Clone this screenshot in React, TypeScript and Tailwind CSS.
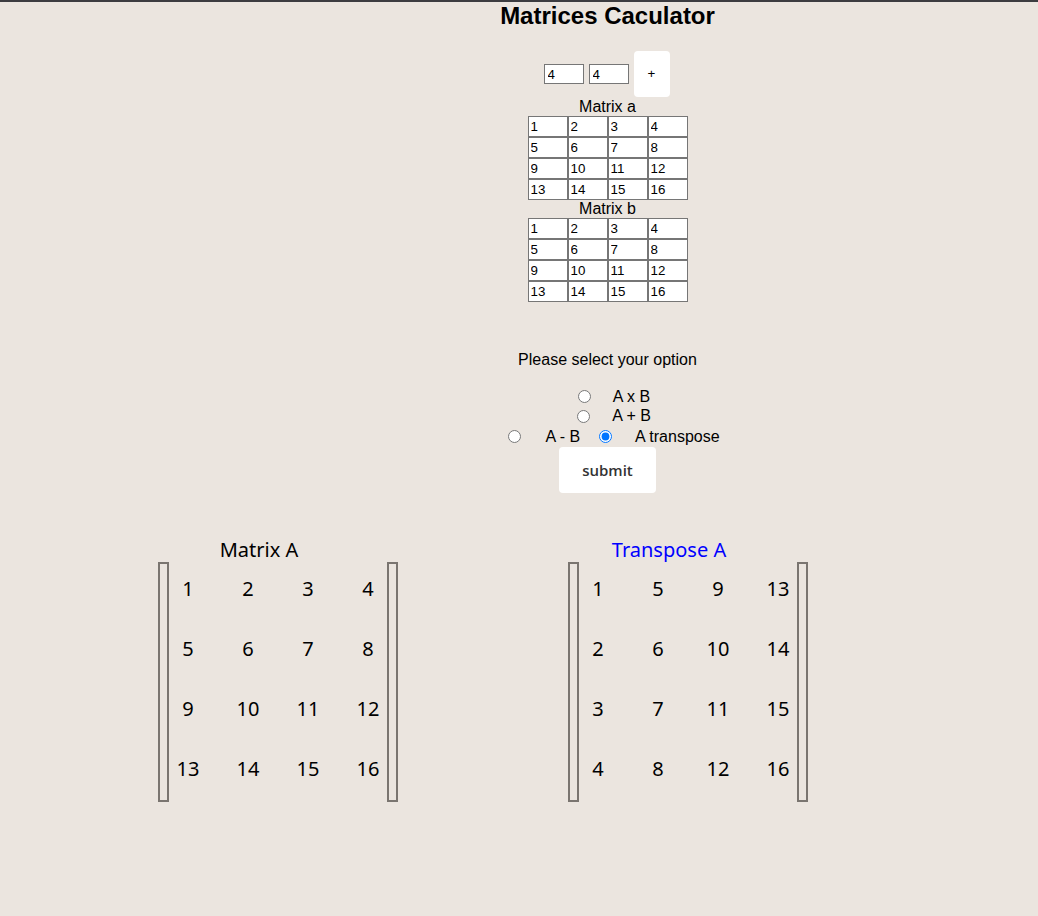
import { useState } from 'react'

const A = [
  [1, 2, 3, 4],
  [5, 6, 7, 8],
  [9, 10, 11, 12],
  [13, 14, 15, 16],
]

const transpose = (m: number[][]) => m[0].map((_, c) => m.map(r => r[c]))

type Op = 'mul' | 'add' | 'sub' | 'tr'

export default function App() {
  const [rows, setRows] = useState('4')
  const [cols, setCols] = useState('4')
  const [op, setOp] = useState<Op>('tr')

  return (
    <div className="min-h-[916px] bg-[#ebe5df] border-t-2 border-[#3c3c40] font-['Liberation_Sans',Arial,sans-serif] text-black">
      <div className="pl-[177px] flex flex-col items-center">
        <h1 className="text-[24px] leading-[28px] font-bold">Matrices Caculator</h1>

        <div className="mt-[21px] h-[46px] flex items-center gap-[5px] -translate-x-[1px]">
          <input
            value={rows}
            onChange={e => setRows(e.target.value)}
            className="w-[40px] h-[20px] bg-white border border-[#767676] px-[3px] text-[13.33px] outline-none"
          />
          <input
            value={cols}
            onChange={e => setCols(e.target.value)}
            className="w-[40px] h-[20px] bg-white border border-[#767676] px-[3px] text-[13.33px] outline-none"
          />
          <button className="w-[36px] h-[46px] bg-white rounded-[4px] text-[13.33px]">+</button>
        </div>

        <p className="text-[16px] leading-[19px]">Matrix a</p>
        <InputGrid />
        <p className="text-[16px] leading-[18px]">Matrix b</p>
        <InputGrid />

        <p className="mt-[49px] text-[16px] leading-[18px]">Please select your option</p>

        <div className="mt-[18px] flex flex-col items-center text-[16px]">
          <div className="h-[19px] flex items-center">
            <Option label="A x B" gap="ml-[22px]" checked={op === 'mul'} onPick={() => setOp('mul')} />
          </div>
          <div className="h-[20px] flex items-center">
            <Option label="A + B" gap="ml-[22px]" checked={op === 'add'} onPick={() => setOp('add')} />
          </div>
          <div className="h-[21px] flex items-center">
            <Option label="A - B" gap="ml-[24px]" checked={op === 'sub'} onPick={() => setOp('sub')} />
            <Option label="A transpose" gap="ml-[23px]" checked={op === 'tr'} onPick={() => setOp('tr')} />
          </div>
        </div>

        <button className="w-[97px] h-[46px] bg-white rounded-[4px] font-['Open_Sans',sans-serif] font-semibold text-[15px] text-[#333]">
          submit
        </button>
      </div>

      <div className="mt-[46px] pl-[158px] flex gap-[169px] font-['Comic_Sans_MS','Noto_Sans',sans-serif]">
        <MatrixView title="Matrix A" data={A} />
        <MatrixView title="Transpose A" data={transpose(A)} blue />
      </div>
    </div>
  )
}

function InputGrid() {
  return (
    <div className="grid grid-cols-[repeat(4,40px)]">
      {A.flat().map((v, i) => (
        <input
          key={i}
          defaultValue={v}
          className="w-[40px] h-[21px] bg-white border border-[#767676] px-[2px] text-[13.33px] outline-none"
        />
      ))}
    </div>
  )
}

function Option({ label, gap, checked, onPick }: { label: string; gap: string; checked: boolean; onPick: () => void }) {
  return (
    <label className="inline-flex items-center">
      <input type="radio" name="op" checked={checked} onChange={onPick} className="ml-[16px] w-[13px] h-[13px] m-0" />
      <span className={`${gap} mr-[3px] leading-[18px]`}>{label}</span>
    </label>
  )
}

function MatrixView({ title, data, blue }: { title: string; data: number[][]; blue?: boolean }) {
  return (
    <div className="w-[241px]">
      <p className={`w-[202px] text-center text-[20px] leading-[22px] ${blue ? 'text-[#0000ff]' : 'text-black'}`}>{title}</p>
      <div className="mt-[1px] flex">
        <div className="w-[11px] h-[240px] border-2 border-[#7a7570]" />
        <div className="w-[218px] h-[240px] grid grid-cols-[repeat(4,38px)] grid-rows-[repeat(4,54px)] gap-x-[22px] gap-y-[6px] text-[20px]">
          {data.flat().map((v, i) => (
            <div key={i} className="flex items-center justify-center">{v}</div>
          ))}
        </div>
        <div className="w-[11px] h-[240px] border-2 border-[#7a7570]" />
      </div>
    </div>
  )
}
